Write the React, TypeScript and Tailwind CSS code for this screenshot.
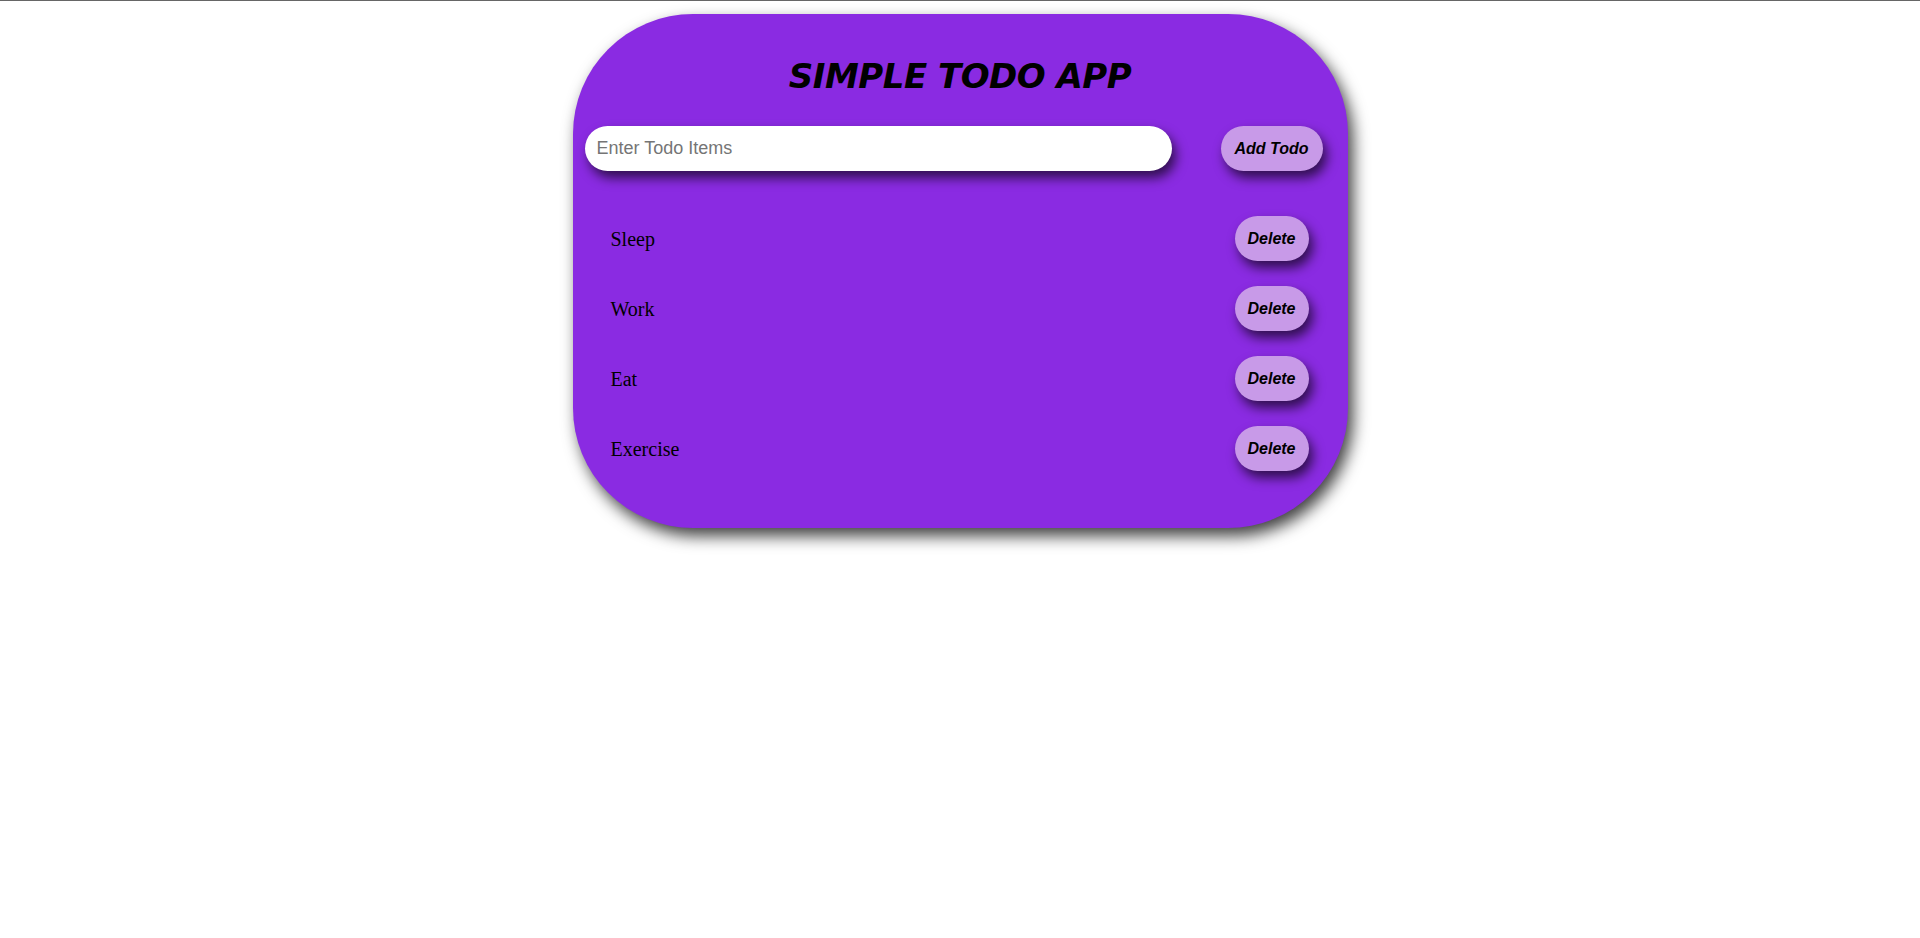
import { useState } from "react";

const INITIAL = ["Sleep", "Work", "Eat", "Exercise"];

export default function App() {
  const [todos, setTodos] = useState<string[]>(INITIAL);
  const [text, setText] = useState("");

  const addTodo = () => {
    if (!text.trim()) return;
    setTodos([...todos, text.trim()]);
    setText("");
  };

  return (
    <div className="min-h-screen bg-white">
      <div className="h-px bg-[#666666]" />

      {/* Card */}
      <div className="mx-auto mt-[13px] w-[775px] h-[514px] rounded-[120px] bg-[#8a2be2] shadow-[5px_8px_16px_rgba(0,0,0,0.75)]">
        <h1 className="pt-[45px] text-center font-['DejaVu_Sans',sans-serif] text-[34px] leading-none font-bold italic tracking-[-0.5px] text-black">
          SIMPLE TODO APP
        </h1>

        <div className="mt-[33px] flex items-center pl-[12px] pr-[25px]">
          <input
            value={text}
            onChange={(e) => setText(e.target.value)}
            placeholder="Enter Todo Items"
            className="h-[45px] w-[587px] rounded-full bg-white px-3 font-['Liberation_Sans',Arial,sans-serif] text-[18px] text-black outline-none placeholder:text-[#757575] shadow-[4px_7px_12px_rgba(0,0,0,0.65)]"
          />
          <button
            onClick={addTodo}
            className="ml-auto h-[45px] w-[102px] rounded-full bg-[#c89ae8] font-['Liberation_Sans',Arial,sans-serif] text-[16px] font-bold italic text-black shadow-[4px_7px_12px_rgba(0,0,0,0.65)]"
          >
            Add Todo
          </button>
        </div>

        <ul className="mt-[45px] flex flex-col gap-[25px] pl-[38px] pr-[39px]">
          {todos.map((t, i) => (
            <li key={t + i} className="flex h-[45px] items-center justify-between">
              <span className="font-['Liberation_Serif','Times_New_Roman',serif] text-[20px] text-black">
                {t}
              </span>
              <button
                onClick={() => setTodos(todos.filter((_, j) => j !== i))}
                className="h-[45px] w-[74px] rounded-full bg-[#c89ae8] font-['Liberation_Sans',Arial,sans-serif] text-[16px] font-bold italic text-black shadow-[4px_7px_12px_rgba(0,0,0,0.65)]"
              >
                Delete
              </button>
            </li>
          ))}
        </ul>
      </div>
    </div>
  );
}
